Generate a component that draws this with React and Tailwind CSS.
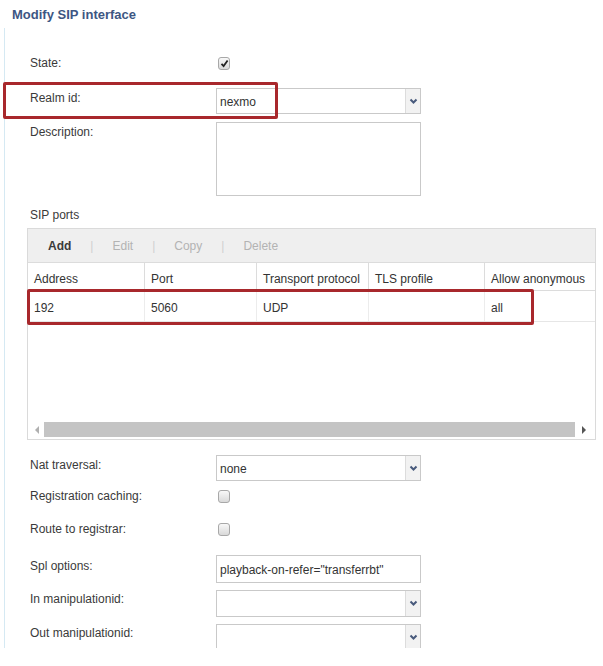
import React from 'react';

const font = { fontFamily: '"Liberation Sans", Arial, sans-serif' };

function Chevron() {
  return (
    <svg width="9" height="7" viewBox="0 0 9 7">
      <path d="M1.5 1.5 L4.5 4.5 L7.5 1.5" fill="none" stroke="#485a7c" strokeWidth="2" />
    </svg>
  );
}

function Select({ value, h = 26 }) {
  return (
    <div className={`flex w-[205px] border border-[#c9c9c9] bg-white ${h === 26 ? 'h-[26px]' : 'h-[27px]'}`}>
      <div className="flex-1 flex items-center pl-[3px] pt-[2px] text-[12px] text-[#333]">{value}</div>
      <div className="w-[15px] flex items-center justify-center border-l border-[#dcdcdc] bg-[#f2f2f2]">
        <Chevron />
      </div>
    </div>
  );
}

function Checkbox({ checked }) {
  return (
    <div className="w-[12px] h-[13px] rounded-[3px] border border-[#a8a8a8] bg-gradient-to-b from-[#f8f8f8] to-[#d9d9d9] flex items-center justify-center">
      {checked && (
        <svg width="9" height="9" viewBox="0 0 9 9">
          <path d="M1.5 4.8 L3.6 7 L7.6 1.5" fill="none" stroke="#222" strokeWidth="1.8" />
        </svg>
      )}
    </div>
  );
}

function Label({ children, className = '' }) {
  return <div className={`w-[186px] shrink-0 text-[12px] leading-[14px] text-[#3a3a3a] ${className}`}>{children}</div>;
}

export default function App() {
  const cols = [
    { name: 'Address', w: 'w-[117px]', val: '192' },
    { name: 'Port', w: 'w-[112px]', val: '5060' },
    { name: 'Transport protocol', w: 'w-[112px]', val: 'UDP' },
    { name: 'TLS profile', w: 'w-[116px]', val: '' },
    { name: 'Allow anonymous', w: 'w-[110px]', val: 'all' },
  ];

  return (
    <div className="relative w-[603px] h-[666px] bg-white overflow-hidden" style={font}>
      {/* Title */}
      <div className="h-[28px] pl-[12px] pt-[7px] text-[13px] leading-[16px] font-bold text-[#3d5683]">
        Modify SIP interface
      </div>

      {/* Form body */}
      <div className="ml-[4px] h-[620px] border-l border-[#d5e9f3] overflow-hidden pl-[25px]">
        {/* State */}
        <div className="mt-[24px] h-[22px] flex items-center">
          <Label>State:</Label>
          <div className="ml-[2px]"><Checkbox checked /></div>
        </div>

        {/* Realm id */}
        <div className="mt-[12px] h-[28px] flex items-start">
          <Label className="pt-[5px]">Realm id:</Label>
          <div className="pt-[2px]"><Select value="nexmo" /></div>
        </div>

        {/* Description */}
        <div className="mt-[8px] flex items-start">
          <Label className="pt-[3px]">Description:</Label>
          <div className="w-[205px] h-[74px] border border-[#c9c9c9] bg-white" />
        </div>

        {/* SIP ports */}
        <div className="mt-[10px] h-[18px] flex items-center text-[12px] text-[#3a3a3a]">SIP ports</div>

        {/* Table panel */}
        <div className="mt-[4px] -ml-[3px] w-[569px] h-[212px] border border-[#dadada] flex flex-col text-[12px]">
          <div className="h-[34px] shrink-0 bg-[#efefef] border-b border-[#dcdcdc] flex items-center pl-[20px] text-[#b3b3b3]">
            <span className="font-bold text-[#3a3a3a]">Add</span>
            <span className="mx-[19px] text-[#d0d0d0]">|</span>
            <span>Edit</span>
            <span className="mx-[19px] text-[#d0d0d0]">|</span>
            <span>Copy</span>
            <span className="mx-[19px] text-[#d0d0d0]">|</span>
            <span>Delete</span>
          </div>
          <div className="h-[28px] shrink-0 flex border-b border-[#dcdcdc] text-[#333]">
            {cols.map((c, i) => (
              <div key={c.name} className={`${c.w} pl-[6px] pt-[7px] ${i < cols.length - 1 ? 'border-r border-[#dcdcdc]' : ''}`}>
                {c.name}
              </div>
            ))}
          </div>
          <div className="h-[31px] shrink-0 flex border-b border-[#e6e6e6] text-[#333]">
            {cols.map((c, i) => (
              <div key={c.name} className={`${c.w} pl-[6px] pt-[8px] ${i < cols.length - 1 ? 'border-r border-[#ececec]' : ''}`}>
                {c.val}
              </div>
            ))}
          </div>
          <div className="flex-1" />
          <div className="h-[17px] shrink-0 flex items-center px-[6px] gap-[4px] mb-[1px]">
            <svg width="6" height="8" viewBox="0 0 6 8"><path d="M5 0 L1 4 L5 8 Z" fill="#b0b0b0" /></svg>
            <div className="flex-1 h-[15px] bg-[#c4c4c4]" />
            <div className="w-[10px] flex justify-center">
              <svg width="5" height="8" viewBox="0 0 5 8"><path d="M0 0 L4 4 L0 8 Z" fill="#555" /></svg>
            </div>
          </div>
        </div>

        {/* Nat traversal */}
        <div className="mt-[15px] h-[26px] flex items-start">
          <Label className="pt-[3px]">Nat traversal:</Label>
          <Select value="none" />
        </div>

        {/* Registration caching */}
        <div className="mt-[4px] h-[22px] flex items-center">
          <Label>Registration caching:</Label>
          <div className="ml-[2px]"><Checkbox /></div>
        </div>

        {/* Route to registrar */}
        <div className="mt-[11px] h-[22px] flex items-center">
          <Label>Route to registrar:</Label>
          <div className="ml-[2px]"><Checkbox /></div>
        </div>

        {/* Spl options */}
        <div className="mt-[15px] h-[28px] flex items-start">
          <Label className="pt-[4px]">Spl options:</Label>
          <div className="w-[205px] h-[28px] border border-[#c9c9c9] bg-white flex items-center pl-[3px] pt-[2px] text-[12px] text-[#333]">
            playback-on-refer="transferrbt"
          </div>
        </div>

        {/* In manipulationid */}
        <div className="mt-[7px] h-[27px] flex items-start">
          <Label className="pt-[2px]">In manipulationid:</Label>
          <Select value="" h={27} />
        </div>

        {/* Out manipulationid */}
        <div className="mt-[7px] h-[27px] flex items-start">
          <Label className="pt-[2px]">Out manipulationid:</Label>
          <Select value="" h={27} />
        </div>
      </div>

      {/* Highlight boxes */}
      <div className="absolute left-[3px] top-[82px] w-[275px] h-[37px] border-[3px] border-[#a8282c] rounded-[2px]" />
      <div className="absolute left-[27px] top-[289px] w-[507px] h-[36px] border-[3px] border-[#a8282c] rounded-[2px]" />
    </div>
  );
}
